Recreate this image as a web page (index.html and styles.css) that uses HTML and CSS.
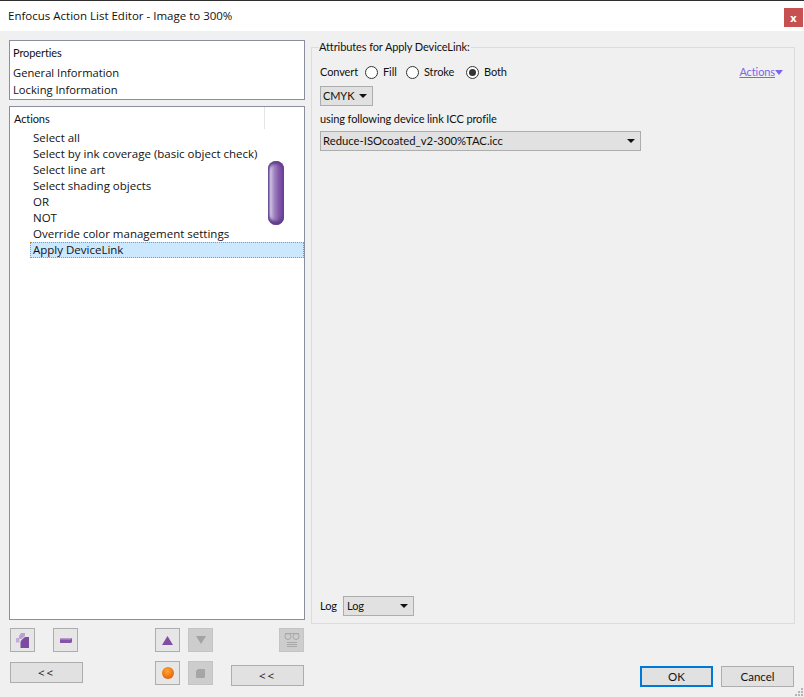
FILE: index.html
```html
<!DOCTYPE html>
<html lang="en">
<head>
<meta charset="utf-8">
<title>Enfocus Action List Editor</title>
<link rel="stylesheet" href="styles.css">
</head>
<body>
<div class="window">
  <header class="titlebar">
    <span class="title">Enfocus Action List Editor - Image to 300%</span>
    <button class="close">x</button>
  </header>
  <main class="content">
    <div class="left">
      <section class="panel props">
        <div class="props-head">Properties</div>
        <div class="props-row">General Information</div>
        <div class="props-row">Locking Information</div>
      </section>
      <section class="panel actions">
        <div class="actions-head"><span class="actions-title">Actions</span></div>
        <ul class="list">
          <li>Select all</li>
          <li>Select by ink coverage (basic object check)</li>
          <li>Select line art</li>
          <li>Select shading objects</li>
          <li>OR</li>
          <li>NOT</li>
          <li>Override color management settings</li>
          <li class="selected">Apply DeviceLink</li>
        </ul>
        <div class="pill"></div>
      </section>
    </div>
    <fieldset class="attrs">
      <legend>Attributes for Apply DeviceLink:</legend>
      <div class="convert">
        <span class="convert-label">Convert</span>
        <span class="radio"></span><span class="opt opt-fill">Fill</span>
        <span class="radio"></span><span class="opt opt-stroke">Stroke</span>
        <span class="radio on"></span><span class="opt">Both</span>
        <a class="link">Actions</a><span class="link-caret"></span>
      </div>
      <div class="select cmyk"><span>CMYK</span><i class="caret"></i></div>
      <div class="using">using following device link ICC profile</div>
      <div class="select profile"><span>Reduce-ISOcoated_v2-300%TAC.icc</span><i class="caret"></i></div>
      <div class="log">
        <span class="log-label">Log</span>
        <div class="select logsel"><span>Log</span><i class="caret"></i></div>
      </div>
    </fieldset>
  </main>
  <footer class="footer">
    <div class="tools">
      <button class="tool t-add"><svg width="13" height="15" viewBox="0 0 13 15"><path d="M5 0h4v3L5.500 6H3V3z" fill="#b9a0cf"/><path d="M0 5h3.500v4.500H0z" fill="#c4aed8"/><path d="M5.500 7 9 4h4v11H4.500V9z" fill="#7d4aa2"/></svg></button>
      <button class="tool t-remove"><svg width="12" height="5" viewBox="0 0 12 5"><path d="M1 0h11v4l-1 1H0V1z" fill="#8652a8"/><path d="M1 0h11l-1 1.500H0z" fill="#b79bcb"/></svg></button>
      <button class="tool t-up"><svg width="11" height="9" viewBox="0 0 11 9"><path d="M5.500 0 11 9H0z" fill="#7f4da3"/></svg></button>
      <button class="tool off t-down"><svg width="10" height="8" viewBox="0 0 10 8"><path d="M5 8 10 0H0z" fill="#a3a3a3"/></svg></button>
      <button class="tool off t-glasses"><svg width="16" height="16" viewBox="0 0 16 16" fill="none" stroke="#a8a8a8"><path d="M1 1.500h14"/><circle cx="4" cy="4.500" r="3"/><circle cx="12" cy="4.500" r="3"/><path d="M3 10.500h10M3 12.500h10M3 14.500h10"/></svg></button>
      <button class="wide w-left">&lt;&lt;</button>
      <button class="tool t-rec"><span class="ball"></span></button>
      <button class="tool off t-stop"><svg width="9" height="9" viewBox="0 0 9 9"><path d="M2 0h7v8L8 9H0V2z" fill="#a6a6a6"/></svg></button>
      <button class="wide w-right">&lt;&lt;</button>
    </div>
    <div class="dialog-btns">
      <button class="wide ok">OK</button>
      <button class="wide cancel">Cancel</button>
    </div>
  </footer>
  <svg class="grip" width="9" height="9" viewBox="0 0 9 9" fill="#b4b4b4"><path d="M6 0h2v2H6zM3 3h2v2H3zM6 3h2v2H6zM0 6h2v2H0zM3 6h2v2H3zM6 6h2v2H6z"/></svg>
</div>
</body>
</html>
```
FILE: styles.css
```css
* { box-sizing: border-box; }
html, body { margin: 0; padding: 0; }
body {
  width: 804px;
  height: 697px;
  overflow: hidden;
  background: #f0f0f0;
  color: #111;
  font: 11.5px/16px "Open Sans", "Noto Sans", sans-serif;
}
button { font: inherit; color: inherit; padding: 0; margin: 0; }
.window { position: relative; display: flex; flex-direction: column; height: 697px; }

.titlebar {
  height: 31px;
  flex: none;
  display: flex;
  align-items: flex-start;
  justify-content: space-between;
  background: #fff;
  border-top: 1px solid #2e2e2e;
  padding: 7px 1px 0 8px;
}
.title { line-height: 16px; }
.close {
  width: 19px;
  height: 19px;
  border: 0;
  background: #c75050;
  color: #fff;
  font-weight: 700;
  font-size: 11px;
  line-height: 17px;
  text-align: center;
}

.content { display: flex; flex: none; height: 594px; padding: 9px 9px 0 9px; }
.left { width: 296px; flex: none; display: flex; flex-direction: column; gap: 6px; }
.panel { background: #fff; border: 1px solid #8b8e9c; }
.props { height: 60px; padding: 4px 3px 0 3px; }
.props-head { margin-bottom: 3px; font-family: Lato, sans-serif; font-size: 11px; letter-spacing: -0.1px; }
.props-row { height: 17px; font-size: 11.2px; line-height: 17px; }
.actions { position: relative; height: 514px; }
.actions-head { height: 23px; padding: 4px 0 0 4px; position: relative; font-family: Lato, sans-serif; font-size: 11px; letter-spacing: -0.1px; }
.actions-head::after { content: ""; position: absolute; left: 254px; top: 0; width: 1px; height: 22px; background: #e4e4e4; }
.list { list-style: none; margin: 0; padding: 0 0 0 20px; }
.list li { height: 16px; padding-left: 3px; line-height: 16px; }
.list .selected { background: #cce8ff; outline: 1px dotted #e8821e; outline-offset: -1px; }
.pill {
  position: absolute;
  left: 258px;
  top: 54px;
  width: 16px;
  height: 64px;
  border-radius: 8px;
  background: linear-gradient(90deg, #7a5aa8 0%, #cfc6e2 16%, #a286c2 38%, #8054a8 70%, #7044a0 100%);
  box-shadow: inset 0 3px 3px #5f3f8c, inset 0 -4px 3px #5f3f8c;
}

.attrs {
  width: 484px;
  height: 584px;
  margin: 0 0 0 6px;
  padding: 0 8px;
  border: 1px solid #dcdcdc;
  display: flex;
  flex-direction: column;
  min-width: 0;
  font-family: Lato, sans-serif;
  font-size: 11px;
  letter-spacing: -0.1px;
}
.attrs legend { padding: 0 1px 0 0; margin: 0 0 0 -1px; line-height: 14px; height: 14px; }
.convert { display: flex; align-items: center; height: 18px; margin-top: 9px; }
.convert-label { width: 45px; flex: none; }
.radio { width: 13px; height: 13px; border-radius: 50%; border: 1px solid #333; background: #fff; flex: none; margin-right: 5px; position: relative; }
.radio.on::after { content: ""; position: absolute; left: 2px; top: 2px; width: 7px; height: 7px; border-radius: 50%; background: #333; }
.opt-fill { width: 23px; }
.opt-stroke { width: 42px; }
.link { margin-left: auto; color: #7b66ea; text-decoration: underline; }
.link-caret { width: 0; height: 0; border: 4px solid transparent; border-top: 5px solid #7b66ea; border-bottom: 0; margin-right: 3px; }

.select {
  display: flex;
  align-items: center;
  justify-content: space-between;
  height: 20px;
  border: 1px solid #adadad;
  background: #e1e1e1;
  padding: 0 5px 0 2px;
}
.caret { width: 0; height: 0; border: 4px solid transparent; border-top: 4px solid #111; border-bottom: 0; }
.cmyk { width: 53px; margin-top: 5px; }
.using { margin-top: 5px; height: 16px; }
.profile { width: 321px; margin-top: 4px; font-size: 11.3px; letter-spacing: 0; }
.log { margin-top: auto; margin-bottom: 7px; display: flex; align-items: center; }
.log-label { width: 23px; flex: none; }
.logsel { width: 71px; padding-left: 3px; }

.footer { display: flex; justify-content: space-between; flex: 1; padding-top: 3px; }
.tools {
  display: grid;
  grid-template-columns: 25px 18px 25px 5px 72px 25px 8px 25px 18px 48px 25px;
  grid-template-rows: 24px 24px;
  row-gap: 9px;
  margin-left: 10px;
  align-self: flex-start;
}
.tool { display: flex; align-items: center; justify-content: center; border: 1px solid #adadad; background: #e6e6e6; }
.tool.off { background: #cdcdcd; border-color: #c4c4c4; }
.wide { height: 21px; border: 1px solid #adadad; background: #e1e1e1; line-height: 17px; text-align: center; }
.t-add { grid-column: 1; grid-row: 1; }
.t-remove { grid-column: 3; grid-row: 1; }
.t-up { grid-column: 6; grid-row: 1; }
.t-down { grid-column: 8; grid-row: 1; }
.t-glasses { grid-column: 11; grid-row: 1; }
.w-left { grid-column: 1 / 5; grid-row: 2; margin-top: 1px; letter-spacing: 2px; }
.t-rec { grid-column: 6; grid-row: 2; }
.t-stop { grid-column: 8; grid-row: 2; }
.w-right { grid-column: 10 / 12; grid-row: 2; margin-top: 4px; letter-spacing: 2px; }
.ball { width: 12px; height: 12px; border-radius: 50%; background: radial-gradient(circle at 45% 35%, #ffa63a 0%, #f07a12 50%, #c9500a 100%); }

.dialog-btns { display: flex; gap: 8px; align-self: flex-end; margin: 0 10px 10px 0; font-family: Lato, sans-serif; font-size: 11.5px; }
.dialog-btns .wide { width: 73px; font: inherit; line-height: 17px; }
.ok { border: 2px solid #0078d7; }
.grip { position: absolute; right: 0; bottom: 0; }
```
